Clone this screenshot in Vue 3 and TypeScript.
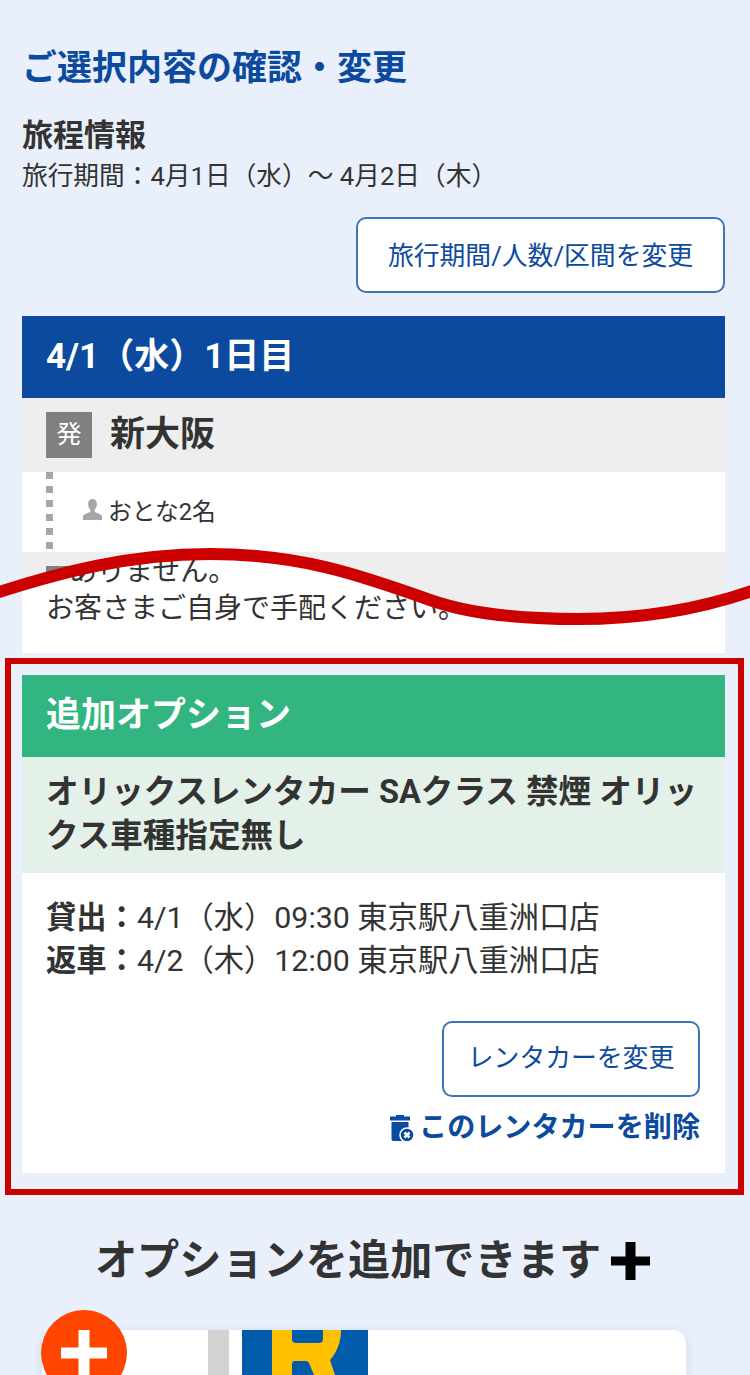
<template>
  <div class="page">
    <h1 class="page-title">ご選択内容の確認・変更</h1>

    <section class="trip">
      <h2 class="trip-title">旅程情報</h2>
      <p class="trip-period">旅行期間：4月1日（水）～ 4月2日（木）</p>
      <div class="trip-actions">
        <button class="outline-btn trip-btn" type="button">旅行期間/人数/区間を変更</button>
      </div>
    </section>

    <section class="day">
      <h3 class="day-head">4/1（水）1日目</h3>
      <div class="stop">
        <span class="stop-badge">発</span>
        <span class="stop-name">新大阪</span>
      </div>
      <div class="pax">
        <svg class="pax-icon" viewBox="0 0 22 22" aria-hidden="true">
          <path d="M11 0c3 0 4.600 2.200 4.600 5.200 0 2.400-1 4.600-2.300 5.800v1.900c0 .7 1.500 1.300 3.200 2 2.300.9 4.500 1.700 4.500 3.600V22H1v-3.500c0-1.900 2.200-2.700 4.500-3.600 1.700-.7 3.200-1.300 3.200-2V11C7.400 9.800 6.400 7.600 6.400 5.200 6.400 2.200 8 0 11 0z" />
        </svg>
        <span>おとな2名</span>
      </div>
      <div class="cut">
        <span class="cut-mark"></span>
        <div class="cut-note">
          <p class="cut-first">ありません。</p>
          <p>お客さまご自身で手配ください。</p>
        </div>
      </div>
    </section>

    <section class="frame">
      <div class="option">
        <h3 class="option-head">追加オプション</h3>
        <p class="option-name">オリックスレンタカー SAクラス 禁煙 オリックス車種指定無し</p>
        <div class="option-body">
          <p v-for="row in rentalRows" :key="row.label" class="option-row">
            <b>{{ row.label }}：</b>{{ row.value }}
          </p>
          <div class="option-actions">
            <button class="outline-btn rental-btn" type="button">レンタカーを変更</button>
            <a class="remove-link">
              <svg class="remove-icon" viewBox="0 0 25 27" aria-hidden="true">
                <path d="M6 0h8v1.500h6v4H0v-4h6z" />
                <path d="M1.500 7h17v19h-15a2 2 0 0 1-2-2z" />
                <circle class="remove-dot" cx="17" cy="20" r="7" />
                <path class="remove-x" d="M14.500 17.500l5 5m0-5l-5 5" />
              </svg>
              <span>このレンタカーを削除</span>
            </a>
          </div>
        </div>
      </div>
    </section>

    <h2 class="add-title">
      <span>オプションを追加できます</span>
      <svg class="add-plus" viewBox="0 0 39 38" aria-hidden="true">
        <path d="M14.500 0h10v14.500h14.500v9H24.500V38h-10V23.500H0v-9h14.500z" />
      </svg>
    </h2>

    <section class="offer">
      <span class="offer-badge">
        <svg viewBox="0 0 46 46" aria-hidden="true">
          <path d="M17.500 0h11v17.500H46v11H28.500V46h-11V28.500H0v-11h17.500z" />
        </svg>
      </span>
      <span class="offer-bar"></span>
      <svg class="offer-logo" viewBox="0 0 126 45" aria-hidden="true">
        <rect width="126" height="45" fill="#005bab" />
        <path fill="#ffc000" d="M30 0H99C99 12 95 22 88 30L93 45H72L67 33C66 31.500 65 31 63 31H53C51 31 50 32 50 34V45H30Z" />
        <path fill="#005bab" d="M50 0H81V9C81 12 79 13 77 13H54C52 13 50 12 50 10Z" />
      </svg>
    </section>

    <svg class="wave" viewBox="0 0 750 90" aria-hidden="true">
      <path d="M-10 53C60 30 130 12 210 12C300 12 360 33 430 58C475 74 530 77 578 77C640 77 700 68 760 46" />
    </svg>
  </div>
</template>

<script setup lang="ts">
interface RentalRow {
  label: string
  value: string
}

const rentalRows: RentalRow[] = [
  { label: '貸出', value: '4/1（水）09:30 東京駅八重洲口店' },
  { label: '返車', value: '4/2（木）12:00 東京駅八重洲口店' }
]
</script>

<style>
html,
body {
  margin: 0;
  background: #e9f0fc;
}
</style>

<style scoped>
.page {
  position: relative;
  box-sizing: border-box;
  width: 750px;
  height: 1375px;
  padding-top: 47px;
  overflow: hidden;
  background: #e9f0fc;
  color: #333;
  font-family: Roboto, "Noto Sans CJK JP", sans-serif;
}

h1,
h2,
h3,
p {
  margin: 0;
}

.page-title {
  margin: 0 22px;
  color: #0b4a9e;
  font-size: 35px;
  line-height: 44px;
  font-weight: 700;
}

.trip {
  margin: 24px 25px 0 22px;
}

.trip-title {
  font-size: 31px;
  line-height: 42px;
  font-weight: 700;
}

.trip-period {
  margin-top: 1px;
  font-size: 25.700px;
  line-height: 36px;
}

.trip-actions {
  display: flex;
  justify-content: flex-end;
  margin-top: 23px;
}

.outline-btn {
  box-sizing: border-box;
  height: 76px;
  padding: 0 0 4px;
  border: 2px solid #3f72b6;
  border-radius: 10px;
  background: #fff;
  color: #0b4a9e;
  font-family: inherit;
  font-size: 25.800px;
}

.trip-btn {
  width: 369px;
}

.day {
  margin: 23px 25px 0 22px;
}

.day-head {
  box-sizing: border-box;
  height: 82px;
  padding-left: 24px;
  background: #0b4a9e;
  color: #fff;
  font-size: 35px;
  line-height: 82px;
  font-weight: 700;
}

.stop {
  display: flex;
  align-items: center;
  gap: 18px;
  box-sizing: border-box;
  height: 74px;
  padding-left: 24px;
  background: #eee;
}

.stop-badge {
  width: 46px;
  height: 46px;
  background: #808080;
  color: #fff;
  font-size: 25px;
  line-height: 46px;
  text-align: center;
}

.stop-name {
  margin-bottom: 10px;
  font-size: 35px;
  font-weight: 700;
}

.pax {
  display: flex;
  align-items: center;
  gap: 5px;
  box-sizing: border-box;
  height: 80px;
  padding: 0 0 6px 60px;
  background:
    repeating-linear-gradient(to bottom, #a6a6a6 0 7px, transparent 7px 14px) 24px 0 / 7px 100% no-repeat,
    #fff;
  font-size: 23.800px;
}

.pax-icon {
  width: 21px;
  height: 21px;
  fill: #a6a6a6;
}

.cut {
  position: relative;
  height: 101px;
  background: #eee;
}

.cut-mark {
  display: block;
  position: absolute;
  top: 14px;
  left: 24px;
  width: 40px;
  height: 20px;
  background: #808080;
}

.cut-note {
  position: absolute;
  inset: 0;
  padding: 1px 24px 0;
  background: #fff;
  clip-path: path("M-32 43C38 20 108 2 188 2C278 2 338 23 408 48C453 64 508 67 556 67C618 67 678 58 738 36V101H-32Z");
  font-size: 28px;
  line-height: 37px;
}

.cut-first {
  padding-left: 23px;
}

.frame {
  box-sizing: border-box;
  margin: 5px 6px 0 5px;
  padding: 11px 13px 16px 11px;
  border: 6px solid #cc0000;
}

.option {
  background: #fff;
}

.option-head {
  height: 82px;
  padding-left: 24px;
  background: #33b581;
  color: #fff;
  font-size: 35px;
  line-height: 82px;
  font-weight: 700;
}

.option-name {
  padding: 13px 18px 15px 24px;
  background: #e4f1e9;
  font-size: 32.600px;
  line-height: 44px;
  font-weight: 700;
}

.option-body {
  padding: 23px 25px 26px 24px;
}

.option-row {
  font-size: 30.300px;
  line-height: 43px;
}

.option-actions {
  display: flex;
  flex-direction: column;
  align-items: flex-end;
  margin-top: 39px;
}

.rental-btn {
  width: 258px;
  padding-bottom: 7px;
}

.remove-link {
  display: flex;
  align-items: center;
  gap: 4px;
  margin-top: 12px;
  color: #0b4a9e;
  font-size: 28.100px;
  line-height: 38px;
  font-weight: 700;
}

.remove-icon {
  width: 25px;
  height: 27px;
  fill: #0b4a9e;
}

.remove-dot {
  stroke: #fff;
  stroke-width: 1.500;
}

.remove-x {
  fill: none;
  stroke: #fff;
  stroke-width: 2.500;
}

.add-title {
  display: flex;
  align-items: center;
  justify-content: center;
  gap: 10px;
  margin-top: 38px;
  padding-right: 5px;
  font-size: 42.200px;
  line-height: 56px;
  font-weight: 700;
}

.add-plus {
  width: 39px;
  height: 38px;
  fill: #000;
}

.offer {
  position: relative;
  display: flex;
  gap: 13px;
  height: 120px;
  margin: 41px 64px 0 42px;
  padding-left: 166px;
  border-radius: 12px;
  background: #fff;
  box-shadow: 0 2px 8px rgba(60, 80, 120, 0.15);
}

.offer-badge {
  position: absolute;
  top: -20px;
  left: -1px;
  display: flex;
  align-items: center;
  justify-content: center;
  width: 86px;
  height: 86px;
  border-radius: 50%;
  background: #ff4500;
}

.offer-badge svg {
  width: 46px;
  height: 46px;
  fill: #fff;
}

.offer-bar {
  width: 21px;
  background: #d2d2d2;
}

.offer-logo {
  width: 126px;
  height: 45px;
}

.wave {
  position: absolute;
  top: 542px;
  left: 0;
  width: 750px;
  height: 90px;
  fill: none;
  stroke: #cc0000;
  stroke-width: 12;
  pointer-events: none;
}
</style>
